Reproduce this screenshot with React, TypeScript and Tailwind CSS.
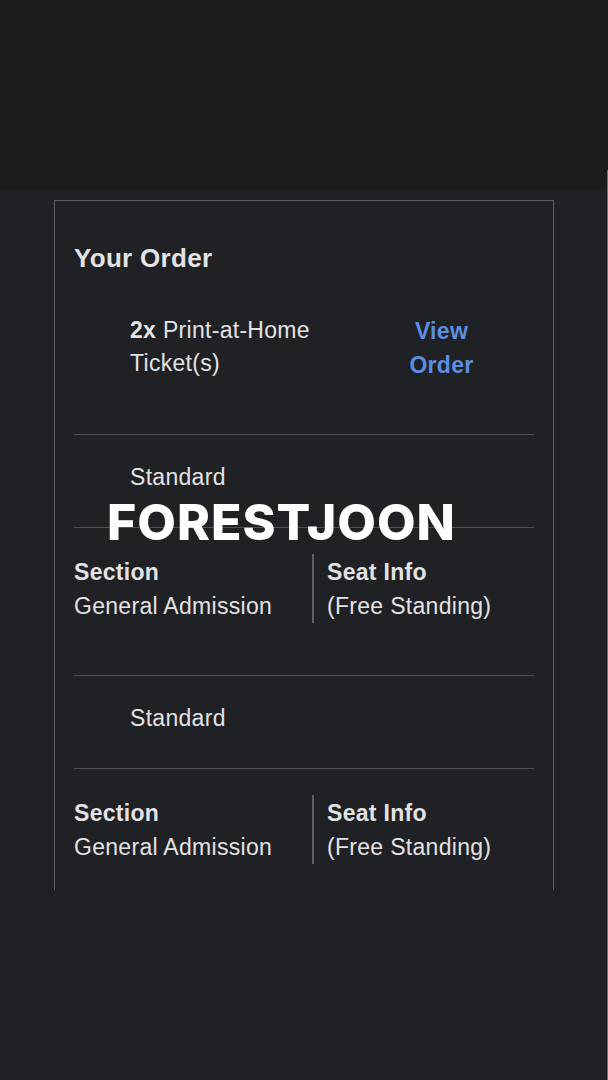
export default function App() {
  const tickets = [
    { tier: "Standard", section: "General Admission", seat: "(Free Standing)" },
    { tier: "Standard", section: "General Admission", seat: "(Free Standing)" },
  ];

  return (
    <div className="relative min-h-[1080px] w-[608px] bg-[#202124] font-['Liberation_Sans',Arial,sans-serif] tracking-[0.3px] text-[#e3e3e5]">
      {/* top dark band */}
      <div className="h-[190px] bg-[#1b1c1e]" />
      <div className="absolute right-0 top-[170px] bottom-0 w-px bg-[#6e6f72]" />

      <div className="ml-[54px] mt-[10px] h-[690px] w-[500px] border-x border-t border-[#5c5d60] px-[19px] pt-[40px]">
        <h2 className="text-[26px] font-bold leading-[34px]">Your Order</h2>

        <div className="mt-[39px] flex pb-[52px]">
          <div className="w-[275px] pl-[56px] text-[23px] leading-[33px]">
            <span className="font-bold">2x</span> Print-at-Home Ticket(s)
          </div>
          <div className="flex-1 text-center text-[23px] font-bold leading-[34px] text-[#5b8fe3]">
            View
            <br />
            Order
          </div>
        </div>

        {tickets.map((t, i) => (
          <div key={i}>
            <div className="border-t border-[#4f5053] pb-[33px] pl-[56px] pt-[25px] text-[23px] leading-[34px]">
              {t.tier}
            </div>
            <div className="flex border-t border-[#4f5053] pb-[52px] pt-[27px] text-[23px] leading-[34px]">
              <div className="w-[238px]">
                <div className="font-bold">Section</div>
                <div>{t.section}</div>
              </div>
              <div className="-mt-px border-l-2 border-[#5f6063] pl-[13px] pt-px">
                <div className="font-bold">Seat Info</div>
                <div>{t.seat}</div>
              </div>
            </div>
          </div>
        ))}
      </div>

      {/* watermark overlay */}
      <div className="pointer-events-none absolute left-[107px] top-[493px] font-['Inter',sans-serif] text-[50px] font-extrabold leading-[58px] tracking-[1px] text-white">
        FORESTJOON
      </div>
    </div>
  );
}
